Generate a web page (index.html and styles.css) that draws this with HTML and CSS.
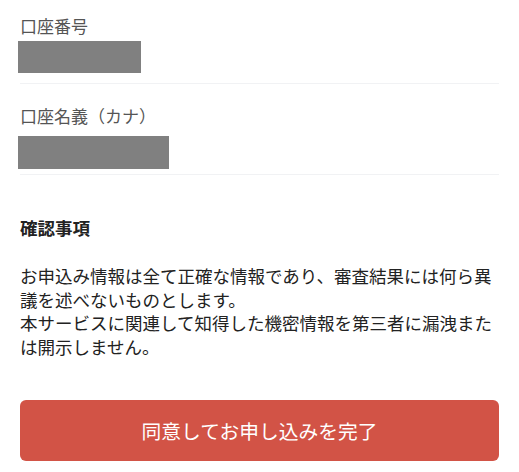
FILE: index.html
```html
<!DOCTYPE html>
<html lang="ja">
<head>
<meta charset="utf-8">
<title>確認</title>
<link rel="stylesheet" href="styles.css">
</head>
<body>
<main class="page">
  <section class="field field-first">
    <div class="label">口座番号</div>
    <div class="mask mask-number"></div>
  </section>
  <section class="field field-second">
    <div class="label">口座名義（カナ）</div>
    <div class="mask mask-name"></div>
  </section>
  <h2 class="heading">確認事項</h2>
  <p class="notice">お申込み情報は全て正確な情報であり、審査結果には何ら異議を述べないものとします。<br>本サービスに関連して知得した機密情報を第三者に漏洩または開示しません。</p>
  <button class="submit" type="button">同意してお申し込みを完了</button>
</main>
</body>
</html>
```

FILE: styles.css
```css
html, body {
  margin: 0;
  padding: 0;
  background: #ffffff;
}

body {
  font-family: "Noto Sans CJK JP", "Noto Sans", sans-serif;
  color: #222222;
}

.page {
  padding: 0 20px;
}

.field {
  border-bottom: 1px solid #f1f2f4;
}

.field-first {
  padding-top: 14px;
  padding-bottom: 10px;
}

.field-second {
  padding-top: 20px;
  padding-bottom: 5px;
}

.label {
  font-size: 17px;
  line-height: 24px;
  color: #555555;
}

.mask {
  background: #808080;
  margin-left: -2px;
}

.mask-number {
  width: 123px;
  height: 32px;
  margin-top: 3px;
}

.mask-name {
  width: 151px;
  height: 33px;
  margin-top: 8px;
}

.heading {
  margin: 41px 0 0;
  font-size: 17.5px;
  line-height: 24px;
  font-weight: 700;
  color: #222222;
}

.notice {
  margin: 24px 0 0;
  font-size: 17.5px;
  line-height: 23.5px;
  color: #222222;
}

.submit {
  display: block;
  width: 100%;
  height: 61px;
  margin-top: 42px;
  border: none;
  border-radius: 6px;
  background: #d25346;
  color: #ffffff;
  font-family: "Noto Sans CJK JP", "Noto Sans", sans-serif;
  font-size: 19.75px;
  font-weight: 400;
  padding: 0;
}
```
